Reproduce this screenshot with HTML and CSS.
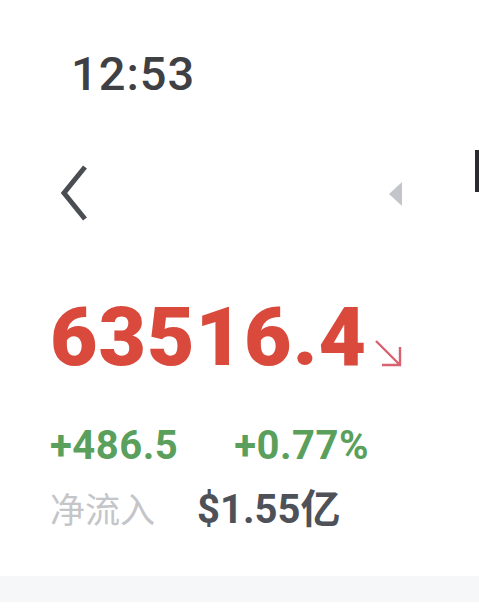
FILE: index.html
```html
<!DOCTYPE html>
<html>
<head>
    <meta charset="utf-8">
    <title>行情</title>
    <meta name="viewport" content="width=device-width, initial-scale=1.0">
    <link rel="stylesheet" href="styles.css">
</head>
<body>
    <div class="status-bar">
        <span class="time">12:53</span>
    </div>

    <div class="nav-bar">
        <svg class="back" width="30" height="56" viewBox="0 0 30 56">
            <path d="M27 2 L6 28 L27 54" fill="none" stroke="#4a4d52" stroke-width="5" stroke-linecap="butt" stroke-linejoin="miter"/>
        </svg>
        <div class="nav-right">
            <svg class="tri" width="16" height="26" viewBox="0 0 16 26">
                <path d="M15 1 L15 25 L2 13 Z" fill="#c2c6ca"/>
            </svg>
            <div class="edge"></div>
        </div>
    </div>

    <div class="quote">
        <div class="price-row">
            <span class="price">63516.4</span>
            <svg class="arrow" width="30" height="30" viewBox="0 0 30 30">
                <path d="M3 3 L27 27 M9 27 L27 27 L27 9" fill="none" stroke="#d8626f" stroke-width="2.4"/>
            </svg>
        </div>
        <div class="change-row">
            <span class="change">+486.5</span>
            <span class="change">+0.77%</span>
        </div>
        <div class="flow-row">
            <span class="flow-label">净流入</span>
            <span class="flow-value">$1.55亿</span>
        </div>
    </div>

    <div class="divider"></div>
</body>
</html>
```

FILE: styles.css
```css
body {
    margin: 0;
    background: #fff;
    font-family: Roboto, "Noto Sans CJK SC", sans-serif;
    width: 479px;
    height: 610px;
    overflow: hidden;
}
.status-bar {
    padding: 46px 0 0 71px;
    height: 64px;
}
.time {
    font-size: 47px;
    font-weight: 500;
    color: #3f4044;
    letter-spacing: 1px;
    line-height: 56px;
}
.nav-bar {
    display: flex;
    justify-content: space-between;
    align-items: flex-start;
    padding: 40px 0 0 58px;
    height: 138px;
}
.back {
    margin-top: 15px;
}
.nav-right {
    display: flex;
    align-items: flex-start;
    gap: 72px;
}
.tri {
    margin-top: 31px;
}
.edge {
    width: 4px;
    height: 42px;
    background: #2a2b2e;
}
.quote {
    padding: 0 0 0 50px;
}
.price-row {
    display: flex;
    align-items: flex-end;
    height: 90px;
}
.price {
    font-size: 82px;
    font-weight: 900;
    color: #d94a3d;
    letter-spacing: 1px;
    line-height: 82px;
}
.arrow {
    margin: 0 0 10px 6px;
}
.change-row {
    display: flex;
    gap: 56px;
    margin-top: 46px;
}
.change {
    font-size: 40px;
    font-weight: 700;
    color: #5a9f5c;
    line-height: 44px;
    letter-spacing: 0.5px;
}
.flow-row {
    display: flex;
    align-items: baseline;
    gap: 42px;
    margin-top: 20px;
}
.flow-label {
    font-size: 35px;
    color: #c3c5c8;
    line-height: 44px;
}
.flow-value {
    font-size: 40px;
    font-weight: 700;
    color: #4f5158;
    line-height: 44px;
}
.divider {
    margin-top: 42px;
    height: 26px;
    background: #f6f7f9;
}
```
